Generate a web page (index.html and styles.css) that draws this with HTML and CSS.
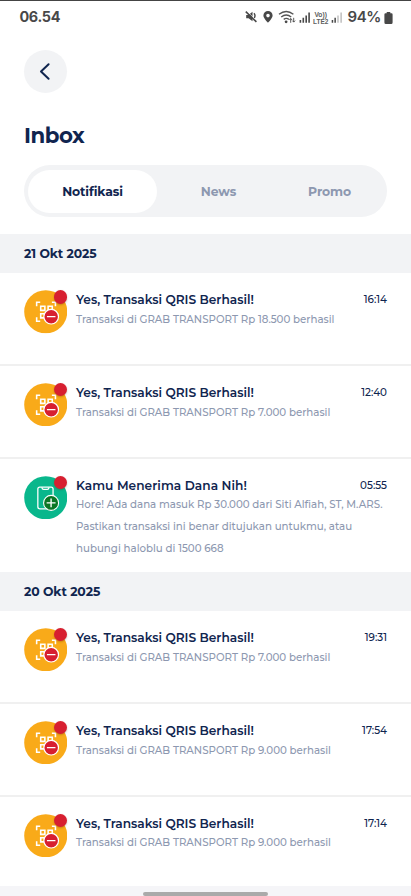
FILE: index.html
```html
<!DOCTYPE html>
<html lang="id">
<head>
<meta charset="utf-8">
<meta name="viewport" content="width=device-width, initial-scale=1">
<title>Inbox</title>
<link rel="stylesheet" href="styles.css">
</head>
<body>
<svg class="defs" aria-hidden="true">
  <symbol id="qris" viewBox="0 0 44 44">
    <circle cx="22" cy="22" r="21.8" fill="#f9aa19"/>
    <g fill="none" stroke="#fff" stroke-width="1.6">
      <path d="M12.8 16.4v-4h3.6M28.2 12.4h3.6v4M12.8 27.5v4.1h3.6"/>
      <path d="M16.9 16.4h4.2v4.2h-4.2zM24.4 16.4h4.2v4.2h-4.2zM16.9 24h4.2v4.2h-4.2z"/>
    </g>
    <circle cx="27.5" cy="27" r="7.4" fill="#d71f30" stroke="#fff" stroke-width="1.2"/>
    <path d="M23.2 27h8.6" stroke="#fff" stroke-width="1.2"/>
  </symbol>
  <symbol id="money-in" viewBox="0 0 44 44">
    <circle cx="22" cy="22" r="21.8" fill="#09b78c"/>
    <rect x="14" y="11.2" width="15.4" height="22" rx="2" fill="none" stroke="#fff" stroke-width="1.3"/>
    <path d="M18 11.5c.3 1.6.8 2 1.8 2h3.8c1 0 1.5-.4 1.8-2" fill="none" stroke="#fff" stroke-width="1.3"/>
    <circle cx="27.4" cy="27.2" r="7.6" fill="#0a7624" stroke="#fff" stroke-width="1.1"/>
    <path d="M22.9 27.2h9M27.4 22.7v9" stroke="#fff" stroke-width="1.4"/>
  </symbol>
</svg>
<main class="screen">
  <header class="status">
    <span class="clock">06.54</span>
    <svg class="status-icons" viewBox="0 0 98 20" width="98" height="20">
      <g fill="#484848">
        <path d="M1.2 8h2.4L7.5 4.8v9.4l-3.9-3H1.2z"/>
        <path d="M9 6.3q2 2.5 0 5" fill="none" stroke="#484848" stroke-width="1.4"/>
        <path d="M2 4.4l9.8 9.4" stroke="#fff" stroke-width=".8"/>
        <path d="M.8 4.7l10.6 10.2" stroke="#484848" stroke-width="1.6"/>
        <path fill-rule="evenodd" d="M23 4a4.6 4.6 0 0 1 4.6 4.6c0 2.9-4.6 7.2-4.6 7.2s-4.6-4.3-4.6-7.2A4.6 4.6 0 0 1 23 4zm0 2.8a1.8 1.8 0 1 0 0 3.6 1.8 1.8 0 0 0 0-3.6z"/>
        <path d="M34 7.3q7.2-5.5 14.4 0M36.2 10q5-4 10 0M38.7 12.4q2.6-2 5.2 0" fill="none" stroke="#555" stroke-width="1.4"/>
        <circle cx="41.1" cy="14.8" r="1.4"/>
        <path d="M45.7 15.8v-4.3m-1.4 1.5 1.4-1.5 1.4 1.5M48.7 10.8v4.3m-1.4-1.5 1.4 1.5 1.4-1.5" fill="none" stroke="#484848" stroke-width=".9"/>
        <path d="M54.6 13h1.6v2.8h-1.6zM57.5 10.8h1.6v5h-1.6zM60.4 8.4H62v7.4h-1.6zM63.3 5.5h1.6v10.3h-1.6z"/>
        <text x="69.4" y="10" class="volte" textLength="12.5" lengthAdjust="spacingAndGlyphs">Vo))</text>
        <text x="68" y="17" class="volte" textLength="15.4" lengthAdjust="spacingAndGlyphs">LTE2</text>
        <path d="M86.7 13h1.5v2.8h-1.5zM89.4 10.8h1.5v5h-1.5z"/>
        <path d="M92.2 8.4h1.6v7.4h-1.6zM95.3 5.5h1.7v10.3h-1.7z" fill="#c6c6c6"/>
      </g>
    </svg>
    <span class="percent">94%</span>
    <svg class="battery" viewBox="0 0 9 12" width="9" height="12"><path d="M2.7 0h3.6v1.2h1.2Q8.6 1.2 8.6 2.5v8Q8.6 12 7.2 12H1.8Q.4 12 .4 10.5v-8Q.4 1.2 1.5 1.2h1.2z" fill="#484848"/></svg>
  </header>

  <button class="back" aria-label="Kembali">
    <svg viewBox="0 0 44 44" width="44" height="44"><path d="M24.6 14.2 17 21.5l7.6 7.3" fill="none" stroke="#10254f" stroke-width="2" stroke-linecap="round" stroke-linejoin="round"/></svg>
  </button>
  <h1>Inbox</h1>
  <nav class="tabs">
    <a class="tab active">Notifikasi</a>
    <a class="tab">News</a>
    <a class="tab">Promo</a>
  </nav>

  <h2 class="date">21 Okt 2025</h2>
  <article class="row">
    <div class="icon"><svg><use href="#qris"/></svg><i class="dot"></i></div>
    <div class="body"><div class="head"><h3>Yes, Transaksi QRIS Berhasil!</h3><time>16:14</time></div>
    <p>Transaksi di GRAB TRANSPORT Rp 18.500 berhasil</p></div>
  </article>
  <article class="row">
    <div class="icon"><svg><use href="#qris"/></svg><i class="dot"></i></div>
    <div class="body"><div class="head"><h3>Yes, Transaksi QRIS Berhasil!</h3><time>12:40</time></div>
    <p>Transaksi di GRAB TRANSPORT Rp 7.000 berhasil</p></div>
  </article>
  <article class="row tall">
    <div class="icon"><svg><use href="#money-in"/></svg><i class="dot"></i></div>
    <div class="body"><div class="head"><h3 class="dana">Kamu Menerima Dana Nih!</h3><time>05:55</time></div>
    <p>Hore! Ada dana masuk Rp 30.000 dari Siti Alfiah, ST, M.ARS.<br>Pastikan transaksi ini benar ditujukan untukmu, atau<br>hubungi haloblu di 1500 668</p></div>
  </article>

  <h2 class="date">20 Okt 2025</h2>
  <article class="row">
    <div class="icon"><svg><use href="#qris"/></svg><i class="dot"></i></div>
    <div class="body"><div class="head"><h3>Yes, Transaksi QRIS Berhasil!</h3><time>19:31</time></div>
    <p>Transaksi di GRAB TRANSPORT Rp 7.000 berhasil</p></div>
  </article>
  <article class="row">
    <div class="icon"><svg><use href="#qris"/></svg><i class="dot"></i></div>
    <div class="body"><div class="head"><h3>Yes, Transaksi QRIS Berhasil!</h3><time>17:54</time></div>
    <p>Transaksi di GRAB TRANSPORT Rp 9.000 berhasil</p></div>
  </article>
  <article class="row last">
    <div class="icon"><svg><use href="#qris"/></svg><i class="dot"></i></div>
    <div class="body"><div class="head"><h3>Yes, Transaksi QRIS Berhasil!</h3><time>17:14</time></div>
    <p>Transaksi di GRAB TRANSPORT Rp 9.000 berhasil</p></div>
  </article>
  <footer class="gesture"><span></span></footer>
</main>
</body>
</html>
```
FILE: styles.css
```css
* { box-sizing: border-box; }
body { margin: 0; background: #fff; }
h1, h2, h3, p { margin: 0; }
.defs { display: none; }

.screen {
  width: 411px;
  height: 896px;
  overflow: hidden;
  display: flex;
  flex-direction: column;
  border-top: 1px solid #444;
  font-family: Montserrat, Inter, sans-serif;
  color: #10254f;
}
.screen > * { flex-shrink: 0; }

.status {
  height: 32px;
  display: flex;
  align-items: center;
  padding: 0 18.5px 0 19.5px;
  color: #484848;
}
.clock { font: 700 14.4px/20px Inter, sans-serif; letter-spacing: -0.35px; margin-right: auto; }
.status-icons { margin-right: 4.5px; margin-top: -1px; }
.volte { font: 700 7px "Liberation Sans", sans-serif; fill: #606060; }
.percent { font: 600 15px/20px Inter, sans-serif; letter-spacing: -0.4px; margin-right: 2.5px; }
.battery { margin-top: 1px; }

.back {
  width: 43.5px;
  height: 43.5px;
  margin: 16.5px 0 0 23.9px;
  padding: 0;
  border: 0;
  border-radius: 50%;
  background: #f2f3f5;
}
.back svg { display: block; }

h1 {
  margin: 26px 0 0 24px;
  height: 46px;
  font-size: 21.3px;
  font-weight: 700;
  line-height: 32px;
  letter-spacing: -0.5px;
}

.tabs {
  width: 363px;
  height: 52px;
  margin-left: 24px;
  padding: 4.5px 4px;
  border-radius: 26px;
  background: #f2f3f5;
  display: grid;
  grid-template-columns: 129px 123px 99px;
}
.tab {
  display: flex;
  align-items: center;
  justify-content: center;
  border-radius: 22px;
  font-size: 12.4px;
  font-weight: 700;
  letter-spacing: -0.12px;
  color: #8d98b0;
}
.tab.active { background: #fff; color: #10254f; }

.date {
  height: 39px;
  padding-left: 24px;
  background: #f2f3f5;
  font-size: 12.4px;
  font-weight: 700;
  letter-spacing: -0.08px;
  line-height: 40.4px;
}
.tabs + .date { margin-top: 17px; }

.row {
  height: 92.8px;
  padding: 17px 24px 0 23.5px;
  display: flex;
  gap: 9px;
  border-bottom: 2px solid #f0f0f0;
}
.row.tall { height: 113.4px; border-bottom: 0; }
.row.last { height: 89.5px; border-bottom: 0; }

.icon { position: relative; width: 43.5px; height: 43.5px; flex: none; }
.icon svg { display: block; width: 43.5px; height: 43.5px; }
.dot {
  position: absolute;
  right: 0;
  top: 0;
  width: 13.5px;
  height: 13.5px;
  border-radius: 50%;
  background: #d71f30;
  box-shadow: 0 1px 2px rgba(80, 40, 0, 0.3);
}

.body { flex: 1; min-width: 0; }
.head { display: flex; justify-content: space-between; height: 18.8px; line-height: 19px; }
h3 { font-size: 12.2px; font-weight: 600; }
.dana { letter-spacing: 0.05px; }
time { font-size: 10.3px; font-weight: 500; line-height: 19.5px; }
p { font-size: 10.25px; font-weight: 500; line-height: 21.6px; color: #8d98b0; white-space: nowrap; }

.gesture {
  flex: 1 0 auto;
  display: flex;
  justify-content: center;
  padding-top: 6px;
  background: #f5f5f8;
}
.gesture span { width: 125px; height: 4px; border-radius: 2px; background: #aaa; }
```
